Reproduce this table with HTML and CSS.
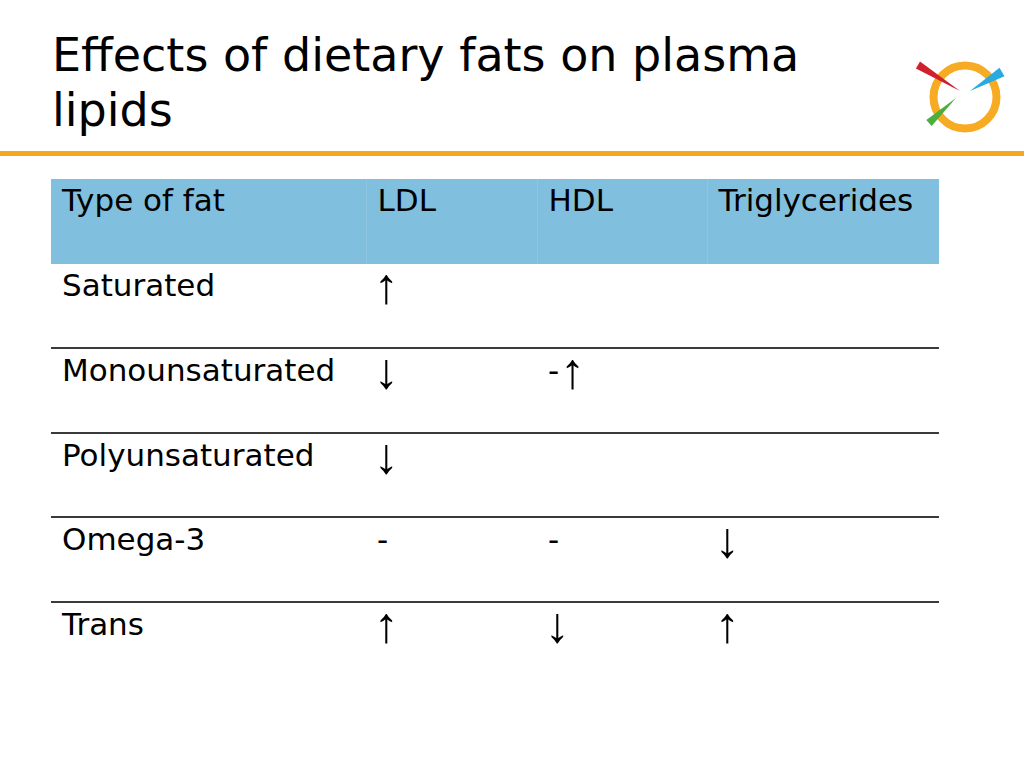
FILE: index.html
```html
<!DOCTYPE html>
<html>
<head>
<meta charset="utf-8">
<link rel="stylesheet" href="styles.css">
</head>
<body>
<div class="slide">
  <header class="header">
    <h1 class="title">Effects of dietary fats on plasma lipids</h1>
    <svg class="logo" width="124" height="90" viewBox="900 55 124 90" aria-hidden="true">
      <circle cx="965" cy="97" r="31.5" fill="none" stroke="#f7ab22" stroke-width="8"/>
      <polygon points="920,61.6 915.9,68.4 960,91" fill="#d0202e"/>
      <polygon points="1004.5,76.3 999.5,67.7 970,91" fill="#27a9e1"/>
      <polygon points="931.7,125.9 926.3,120.1 956,98" fill="#4cae3d"/>
    </svg>
  </header>
  <div class="rule"></div>
  <table class="fats">
    <thead>
      <tr><th class="c1">Type of fat</th><th class="c2">LDL</th><th class="c3">HDL</th><th class="c4">Triglycerides</th></tr>
    </thead>
    <tbody>
      <tr><td>Saturated</td><td><span class="arr">↑</span></td><td></td><td></td></tr>
      <tr><td>Monounsaturated</td><td><span class="arr">↓</span></td><td>-<span class="arr after">↑</span></td><td></td></tr>
      <tr><td>Polyunsaturated</td><td><span class="arr">↓</span></td><td></td><td></td></tr>
      <tr><td>Omega-3</td><td>-</td><td>-</td><td><span class="arr">↓</span></td></tr>
      <tr class="last"><td>Trans</td><td><span class="arr">↑</span></td><td><span class="arr">↓</span></td><td><span class="arr">↑</span></td></tr>
    </tbody>
  </table>
</div>
</body>
</html>
```
FILE: styles.css
```css
html, body {
  margin: 0;
  padding: 0;
  background: #ffffff;
}
.slide {
  width: 1024px;
  height: 768px;
  font-family: "DejaVu Sans", "Liberation Sans", sans-serif;
  color: #000;
  overflow: hidden;
}
.header {
  position: relative;
  height: 151px;
}
.title {
  margin: 0;
  padding: 28px 0 0 52px;
  width: 800px;
  height: 123px;
  box-sizing: border-box;
  font-weight: normal;
  font-size: 46px;
  line-height: 55px;
}
.logo {
  position: absolute;
  left: 900px;
  top: 55px;
}
.rule {
  height: 5px;
  background: #f5a81e;
}
.fats {
  margin: 23px 0 0 51px;
  border-collapse: collapse;
  width: 888px;
  font-size: 31px;
}
.fats th, .fats td {
  height: 84.5px;
  padding: 1px 11px 0;
  box-sizing: border-box;
  vertical-align: top;
  text-align: left;
  font-weight: normal;
  line-height: 40px;
}
.fats th {
  background: #80bfde;
  border-left: 1px solid #8ec6e1;
}
.fats th.c1 { width: 315px; border-left: none; }
.fats th.c2 { width: 171px; }
.fats th.c3 { width: 170px; }
.fats th.c4 { width: 232px; }
.fats tbody td {
  border-bottom: 2px solid #3a3a3a;
}
.fats tbody tr.last td {
  border-bottom: none;
}
.arr {
  font-family: "Liberation Serif", serif;
  font-size: 50px;
  line-height: 40px;
  display: inline-block;
  vertical-align: top;
  margin-left: -3px;
  transform: translateY(1px);
}
.arr.after {
  margin-left: 1px;
}
```
